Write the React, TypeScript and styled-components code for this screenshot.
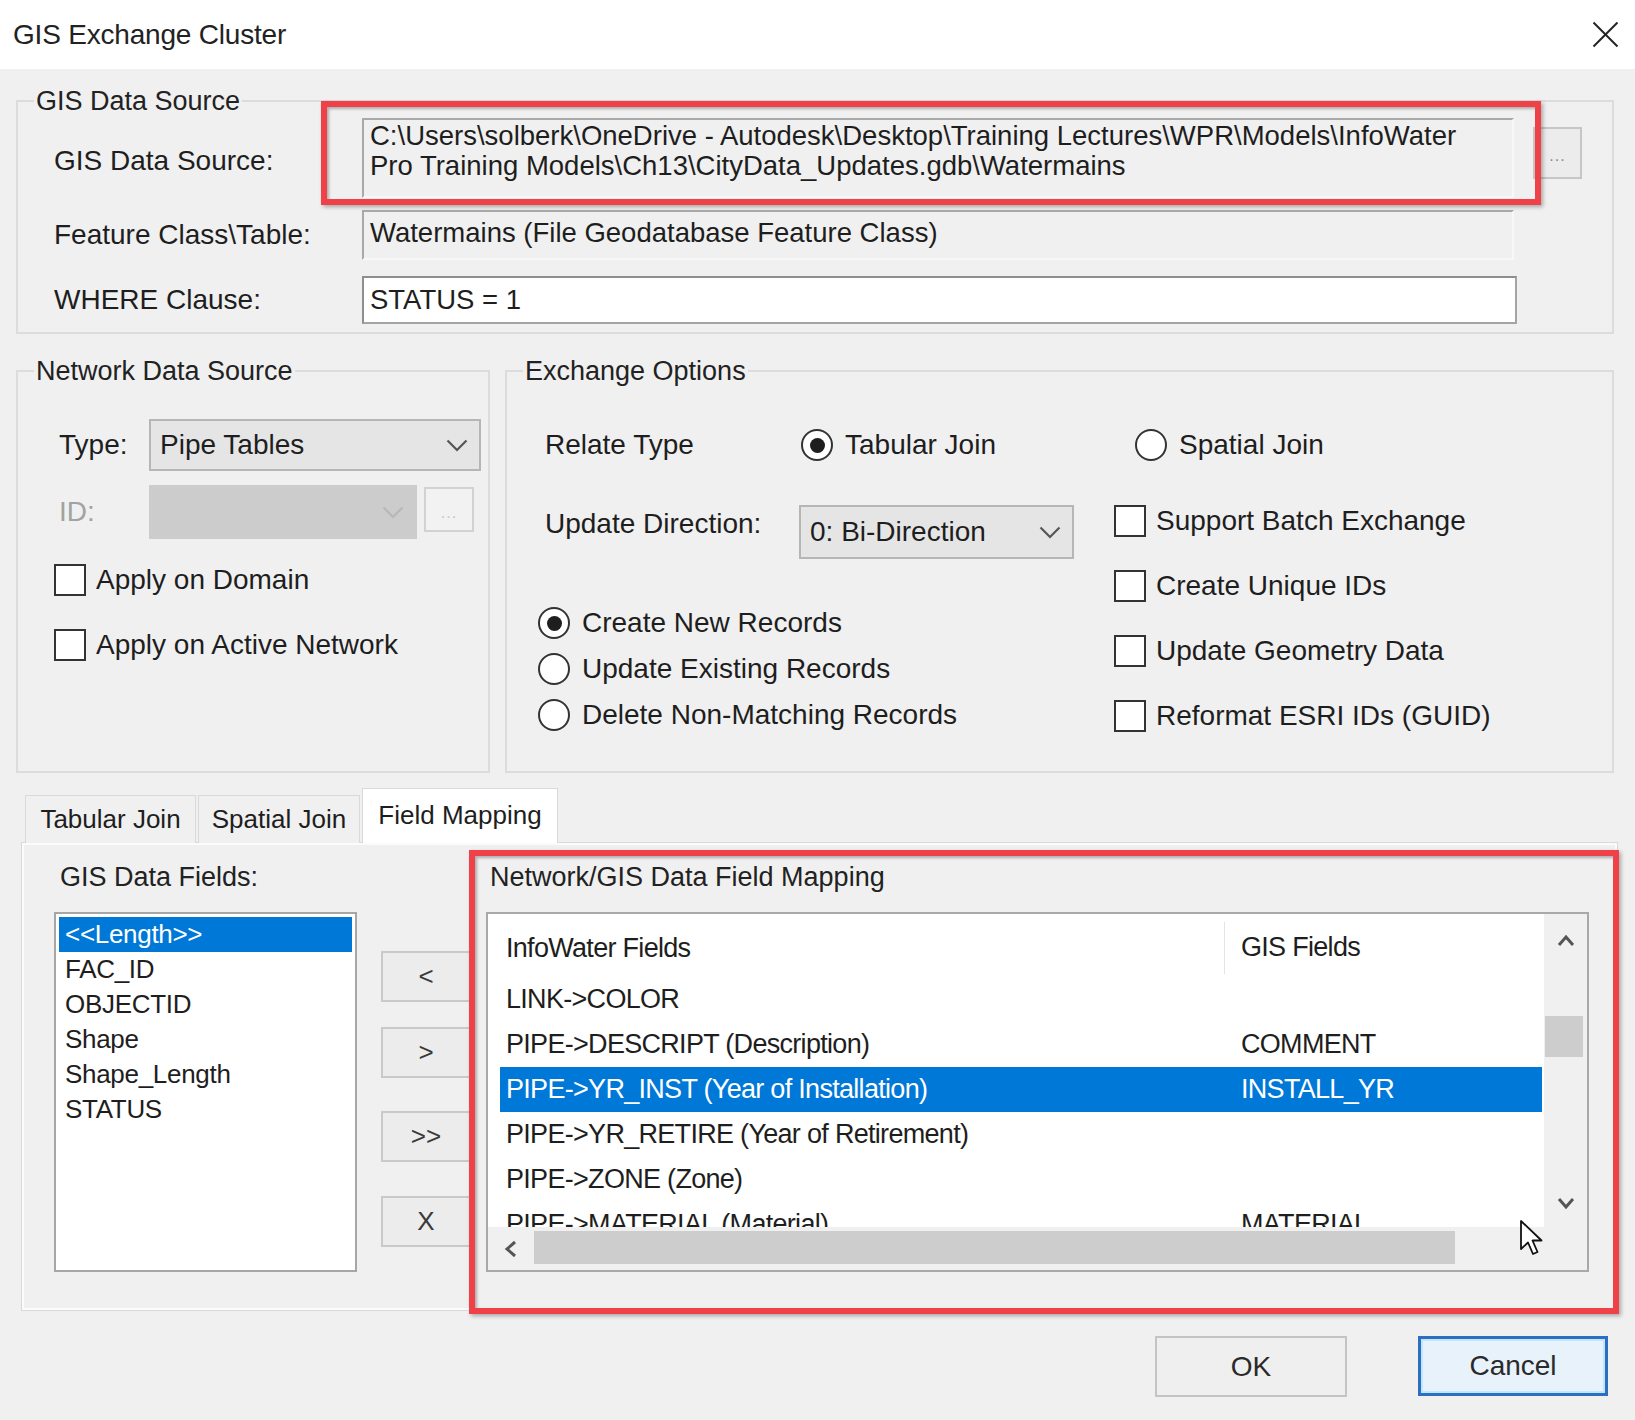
import React from "react";
import styled, { createGlobalStyle } from "styled-components";

const GlobalStyle = createGlobalStyle`
  html, body { margin: 0; padding: 0; background: #f0f0f0; }
  body { font-family: "Liberation Sans", Arial, sans-serif; color: #1e1e1e; }
  * { box-sizing: border-box; }
`;

const Window = styled.div`
  position: relative;
  width: 1635px;
  height: 1420px;
  background: #f0f0f0;
  display: flex;
  flex-direction: column;
  overflow: hidden;
`;

const TitleBar = styled.div`
  flex: none;
  height: 69px;
  background: #ffffff;
  display: flex;
  align-items: center;
  justify-content: space-between;
  padding: 0 16px 0 13px;
`;

const Title = styled.div`
  font-size: 28px;
  color: #222;
  letter-spacing: -0.2px;
  margin-top: 1px;
`;

const CloseIcon = styled.svg`
  width: 27px;
  height: 27px;
`;

const Body = styled.div`
  flex: 1;
  display: flex;
  flex-direction: column;
  padding: 17px 21px 0 16px;
`;

const GroupBox = styled.fieldset<{ $w: number; $h: number }>`
  margin: 0;
  padding: 0 0 0 16px;
  min-width: 0;
  width: ${(p) => p.$w}px;
  height: ${(p) => p.$h}px;
  border: 2px solid #dcdcdc;
  flex: none;
`;

const Legend = styled.legend`
  padding: 0 2px;
  font-size: 27px;
  line-height: 30px;
  color: #222;
`;

const Label = styled.span<{ $disabled?: boolean; $w?: number; $mt?: number }>`
  font-size: 28px;
  line-height: 30px;
  white-space: nowrap;
  color: ${(p) => (p.$disabled ? "#a2a2a2" : "#1e1e1e")};
  ${(p) => (p.$w ? `width: ${p.$w}px; flex: none;` : "")}
  ${(p) => (p.$mt ? `margin-top: ${p.$mt}px;` : "")}
`;

/* ---------- GIS Data Source ---------- */

const GisBody = styled.div`
  padding: 2px 0 0 20px;
  display: flex;
  flex-direction: column;
`;

const FieldRow = styled.div<{ $h: number; $mt?: number }>`
  display: grid;
  grid-template-columns: 308px 1155px auto;
  align-items: center;
  height: ${(p) => p.$h}px;
  margin-top: ${(p) => p.$mt ?? 0}px;
`;

const ReadOnlyBox = styled.div<{ $pt: number }>`
  align-self: stretch;
  width: 1152px;
  background: #f0f0f0;
  border-style: solid;
  border-width: 2px;
  border-color: #a9a9a9 #f8f8f8 #f8f8f8 #a9a9a9;
  padding: ${(p) => p.$pt}px 6px 0 6px;
  font-size: 27.5px;
  line-height: 30px;
  white-space: nowrap;
  overflow: hidden;
  color: #1e1e1e;
`;

const TextInput = styled.div`
  align-self: stretch;
  background: #ffffff;
  border: 2px solid #a4a4a4;
  border-top-color: #8e8e8e;
  border-left-color: #8e8e8e;
  display: flex;
  align-items: center;
  padding: 0 6px;
  font-size: 27.5px;
  color: #1e1e1e;
`;

const BrowseButton = styled.div<{ $w: number; $h: number; $disabled?: boolean; $ml?: number; $mt?: number }>`
  align-self: start;
  width: ${(p) => p.$w}px;
  height: ${(p) => p.$h}px;
  margin-left: ${(p) => p.$ml ?? 0}px;
  margin-top: ${(p) => p.$mt ?? 0}px;
  border: 2px solid ${(p) => (p.$disabled ? "#d2d2d2" : "#c6c6c6")};
  background: ${(p) => (p.$disabled ? "#f2f2f2" : "#ececec")};
  display: flex;
  align-items: center;
  justify-content: center;
  font-size: 16px;
  letter-spacing: 1px;
  color: ${(p) => (p.$disabled ? "#c6c6c6" : "#8a8a8a")};
  padding-top: 6px;
`;

/* ---------- Network / Exchange ---------- */

const GroupsRow = styled.div`
  display: flex;
  gap: 15px;
  margin-top: 22px;
`;

const NetBody = styled.div`
  display: flex;
  flex-direction: column;
  padding: 33px 0 0 25px;
`;

const NetRow = styled.div<{ $h: number; $mt?: number }>`
  display: flex;
  align-items: center;
  height: ${(p) => p.$h}px;
  margin-top: ${(p) => p.$mt ?? 0}px;
`;

const Select = styled.div<{ $w: number; $h: number; $disabled?: boolean; $mt?: number }>`
  flex: none;
  width: ${(p) => p.$w}px;
  height: ${(p) => p.$h}px;
  margin-top: ${(p) => p.$mt ?? 0}px;
  display: flex;
  align-items: center;
  justify-content: space-between;
  padding: 0 11px 0 9px;
  background: ${(p) => (p.$disabled ? "#cccccc" : "#e5e5e5")};
  border: 2px solid ${(p) => (p.$disabled ? "#cccccc" : "#b6b6b6")};
  font-size: 28px;
  color: #1e1e1e;
`;

const Chevron = styled.svg`
  width: 22px;
  height: 13px;
  flex: none;
`;

const CheckItem = styled.div<{ $h: number; $mt?: number; $ml?: number }>`
  display: flex;
  align-items: center;
  gap: 10px;
  height: ${(p) => p.$h}px;
  margin-top: ${(p) => p.$mt ?? 0}px;
  margin-left: ${(p) => p.$ml ?? 0}px;
`;

const CheckBox = styled.span`
  flex: none;
  width: 32px;
  height: 32px;
  background: #ffffff;
  border: 2px solid #333333;
`;

const RadioItem = styled.div<{ $h?: number; $w?: number }>`
  display: flex;
  align-items: center;
  gap: 12px;
  ${(p) => (p.$h ? `height: ${p.$h}px;` : "")}
  ${(p) => (p.$w ? `width: ${p.$w}px; flex: none;` : "")}
`;

const RadioCircle = styled.span<{ $checked?: boolean }>`
  flex: none;
  width: 32px;
  height: 32px;
  border-radius: 50%;
  border: 2.5px solid #333333;
  background: #ffffff;
  display: flex;
  align-items: center;
  justify-content: center;
  &::after {
    content: "";
    width: 15px;
    height: 15px;
    border-radius: 50%;
    background: ${(p) => (p.$checked ? "#1e1e1e" : "transparent")};
  }
`;

const ExBody = styled.div`
  display: flex;
  flex-direction: column;
  padding-top: 34px;
`;

const RelateRow = styled.div`
  display: flex;
  align-items: center;
  height: 50px;
  padding-left: 22px;
`;

const ExColumns = styled.div`
  display: flex;
  margin-top: 18px;
`;

const ExLeft = styled.div`
  width: 591px;
  flex: none;
  display: flex;
  flex-direction: column;
`;

const UpdateRow = styled.div`
  display: flex;
  align-items: center;
  height: 72px;
  padding-left: 22px;
`;

const RadioList = styled.div`
  display: flex;
  flex-direction: column;
  margin-top: 40px;
  padding-left: 15px;
`;

const ExRight = styled.div`
  display: flex;
  flex-direction: column;
`;

/* ---------- Tabs ---------- */

const TabStrip = styled.div`
  display: flex;
  align-items: flex-end;
  gap: 2px;
  height: 54px;
  margin-top: 16px;
  margin-left: 9px;
  margin-bottom: -1px;
`;

const Tab = styled.div<{ $active?: boolean; $w: number }>`
  position: relative;
  z-index: ${(p) => (p.$active ? 2 : 0)};
  width: ${(p) => p.$w}px;
  height: ${(p) => (p.$active ? 55 : 48)}px;
  display: flex;
  align-items: center;
  justify-content: center;
  padding-bottom: ${(p) => (p.$active ? 2 : 0)}px;
  background: ${(p) => (p.$active ? "#ffffff" : "#f0f0f0")};
  border: 1px solid #d9d9d9;
  border-bottom: none;
  font-size: 26px;
  color: #1e1e1e;
`;

const TabPanel = styled.div`
  width: 1597px;
  height: 469px;
  margin-left: 5px;
  border: 1px solid #d9d9d9;
  box-shadow: inset 0 0 0 2px #fbfbfb;
  background: #f0f0f0;
  display: flex;
  padding: 12px 0 0 32px;
`;

const FieldsCol = styled.div`
  width: 303px;
  flex: none;
  display: flex;
  flex-direction: column;
  padding-top: 7px;
`;

const PlainLabel = styled.span<{ $ml?: number }>`
  font-size: 27px;
  line-height: 30px;
  color: #222;
  white-space: nowrap;
  margin-left: ${(p) => p.$ml ?? 0}px;
`;

const ListBox = styled.div`
  margin-top: 20px;
  height: 360px;
  background: #ffffff;
  border: 2px solid #a6a6a6;
  padding: 3px;
  display: flex;
  flex-direction: column;
`;

const ListItem = styled.div<{ $selected?: boolean }>`
  height: 35px;
  line-height: 35px;
  padding-left: 6px;
  font-size: 26px;
  letter-spacing: -0.3px;
  background: ${(p) => (p.$selected ? "#0078d7" : "transparent")};
  color: ${(p) => (p.$selected ? "#ffffff" : "#1e1e1e")};
`;

const MoveCol = styled.div`
  width: 94px;
  flex: none;
  margin-left: 24px;
  display: flex;
  flex-direction: column;
`;

const MoveButton = styled.div<{ $mt: number }>`
  height: 51px;
  margin-top: ${(p) => p.$mt}px;
  border: 2px solid #c9c9c9;
  background: #ececec;
  display: flex;
  align-items: center;
  justify-content: center;
  padding-right: 4px;
  font-size: 26px;
  color: #3a3a3a;
`;

const MappingArea = styled.div`
  width: 1138px;
  height: 452px;
  flex: none;
  display: flex;
  flex-direction: column;
  padding: 7px 0 0 11px;
`;

const ListView = styled.div`
  margin-top: 20px;
  width: 1103px;
  height: 360px;
  border: 2px solid #a9a9a9;
  display: grid;
  grid-template-columns: 1fr 43px;
  grid-template-rows: 1fr 43px;
  background: #f0f0f0;
`;

const ListContent = styled.div`
  background: #ffffff;
  overflow: hidden;
  display: flex;
  flex-direction: column;
`;

const MapRow = styled.div<{ $selected?: boolean; $header?: boolean }>`
  flex: none;
  display: grid;
  grid-template-columns: 725px 1fr;
  align-items: center;
  margin: 0 2px 0 12px;
  height: ${(p) => (p.$header ? 63 : 45)}px;
  padding-top: ${(p) => (p.$header ? 3 : 0)}px;
  background: ${(p) => (p.$selected ? "#0078d7" : "transparent")};
  color: ${(p) => (p.$selected ? "#ffffff" : "#1e1e1e")};
  font-size: 27px;
  letter-spacing: -0.7px;
  white-space: nowrap;
`;

const MapCell = styled.div<{ $first?: boolean; $header?: boolean }>`
  padding-left: ${(p) => (p.$first ? 6 : 16)}px;
  ${(p) =>
    p.$header && p.$first
      ? `border-right: 1px solid #e4e4e4; height: 52px; display: flex; align-items: center; margin-top: 2px;`
      : ""}
`;

const VScroll = styled.div`
  display: flex;
  flex-direction: column;
  background: #f0f0f0;
`;

const HScroll = styled.div`
  display: flex;
  background: #f0f0f0;
`;

const ScrollArrow = styled.div<{ $w?: number; $h?: number }>`
  flex: none;
  ${(p) => (p.$w ? `width: ${p.$w}px;` : "")}
  ${(p) => (p.$h ? `height: ${p.$h}px;` : "")}
  display: flex;
  align-items: center;
  justify-content: center;
`;

const VThumb = styled.div`
  margin: 48px 4px 0 1px;
  height: 41px;
  background: #cdcdcd;
`;

const HThumb = styled.div`
  margin-top: 4px;
  width: 921px;
  height: 33px;
  background: #cdcdcd;
`;

const Spacer = styled.div`
  flex: 1;
`;

const Corner = styled.div`
  background: #f0f0f0;
`;

/* ---------- Footer ---------- */

const ButtonBar = styled.div`
  display: flex;
  justify-content: flex-end;
  align-items: flex-start;
  gap: 71px;
  margin-top: 25px;
  padding-right: 6px;
`;

const DialogButton = styled.div<{ $default?: boolean }>`
  width: ${(p) => (p.$default ? 190 : 192)}px;
  height: ${(p) => (p.$default ? 60 : 61)}px;
  display: flex;
  align-items: center;
  justify-content: center;
  font-size: 28px;
  color: #2a2a2a;
  background: ${(p) => (p.$default ? "#e8f2fb" : "#efefef")};
  border: ${(p) => (p.$default ? "3px solid #2a6fc0" : "2px solid #c4c4c4")};
  box-shadow: ${(p) => (p.$default ? "inset 0 0 0 2px #bfe6fb" : "none")};
`;

/* ---------- Overlays ---------- */

const Highlight = styled.div<{ $x: number; $y: number; $w: number; $h: number }>`
  position: absolute;
  left: ${(p) => p.$x}px;
  top: ${(p) => p.$y}px;
  width: ${(p) => p.$w}px;
  height: ${(p) => p.$h}px;
  border: 6px solid #ef4148;
  box-shadow: 2px 2px 4px rgba(0, 0, 0, 0.3), inset 2px 2px 3px rgba(0, 0, 0, 0.28);
  pointer-events: none;
  z-index: 5;
`;

const Cursor = styled.svg`
  position: absolute;
  left: 1519px;
  top: 1219px;
  width: 26px;
  height: 38px;
  z-index: 6;
`;

const DownChevron = ({ color = "#555" }: { color?: string }) => (
  <Chevron viewBox="0 0 22 13">
    <polyline points="1.5,1.5 11,11 20.5,1.5" fill="none" stroke={color} strokeWidth="2.2" />
  </Chevron>
);

const ScrollChevron = ({ dir }: { dir: "up" | "down" | "left" }) => {
  const pts =
    dir === "up" ? "3,12 10,4 17,12" : dir === "down" ? "3,4 10,12 17,4" : "12,3 4,10 12,17";
  const w = dir === "left" ? 16 : 20;
  const h = dir === "left" ? 20 : 16;
  return (
    <svg width={w} height={h} viewBox={`0 0 ${w} ${h}`}>
      <polyline points={pts} fill="none" stroke="#555" strokeWidth="3" strokeLinejoin="miter" />
    </svg>
  );
};

const gisFields = ["<<Length>>", "FAC_ID", "OBJECTID", "Shape", "Shape_Length", "STATUS"];

const mappings: { info: string; gis: string; selected?: boolean }[] = [
  { info: "LINK->COLOR", gis: "" },
  { info: "PIPE->DESCRIPT (Description)", gis: "COMMENT" },
  { info: "PIPE->YR_INST (Year of Installation)", gis: "INSTALL_YR", selected: true },
  { info: "PIPE->YR_RETIRE (Year of Retirement)", gis: "" },
  { info: "PIPE->ZONE (Zone)", gis: "" },
  { info: "PIPE->MATERIAL (Material)", gis: "MATERIAL" },
];

export default function App() {
  return (
    <>
      <GlobalStyle />
      <Window>
        <TitleBar>
          <Title>GIS Exchange Cluster</Title>
          <CloseIcon viewBox="0 0 27 27">
            <line x1="1.5" y1="1.5" x2="25.5" y2="25.5" stroke="#222" strokeWidth="2" />
            <line x1="25.5" y1="1.5" x2="1.5" y2="25.5" stroke="#222" strokeWidth="2" />
          </CloseIcon>
        </TitleBar>

        <Body>
          <GroupBox $w={1598} $h={248}>
            <Legend>GIS Data Source</Legend>
            <GisBody>
              <FieldRow $h={80}>
                <Label $mt={6}>GIS Data Source:</Label>
                <ReadOnlyBox $pt={1}>
                  C:\Users\solberk\OneDrive - Autodesk\Desktop\Training Lectures\WPR\Models\InfoWater
                  <br />
                  Pro Training Models\Ch13\CityData_Updates.gdb\Watermains
                </ReadOnlyBox>
                <BrowseButton $w={49} $h={52} $ml={16} $mt={9}>
                  ...
                </BrowseButton>
              </FieldRow>
              <FieldRow $h={50} $mt={12}>
                <Label>Feature Class\Table:</Label>
                <ReadOnlyBox $pt={6}>Watermains (File Geodatabase Feature Class)</ReadOnlyBox>
              </FieldRow>
              <FieldRow $h={48} $mt={16}>
                <Label>WHERE Clause:</Label>
                <TextInput>STATUS = 1</TextInput>
              </FieldRow>
            </GisBody>
          </GroupBox>

          <GroupsRow>
            <GroupBox $w={474} $h={417}>
              <Legend>Network Data Source</Legend>
              <NetBody>
                <NetRow $h={52}>
                  <Label $w={90}>Type:</Label>
                  <Select $w={332} $h={52}>
                    <span>Pipe Tables</span>
                    <DownChevron />
                  </Select>
                </NetRow>
                <NetRow $h={54} $mt={14}>
                  <Label $w={90} $disabled>
                    ID:
                  </Label>
                  <Select $w={268} $h={54} $disabled>
                    <span />
                    <DownChevron color="#b8b8b8" />
                  </Select>
                  <BrowseButton $w={50} $h={45} $ml={7} $mt={2} $disabled>
                    ...
                  </BrowseButton>
                </NetRow>
                <CheckItem $h={50} $mt={16} $ml={-5}>
                  <CheckBox />
                  <Label>Apply on Domain</Label>
                </CheckItem>
                <CheckItem $h={50} $mt={15} $ml={-5}>
                  <CheckBox />
                  <Label>Apply on Active Network</Label>
                </CheckItem>
              </NetBody>
            </GroupBox>

            <GroupBox $w={1109} $h={417}>
              <Legend>Exchange Options</Legend>
              <ExBody>
                <RelateRow>
                  <Label $w={256}>Relate Type</Label>
                  <RadioItem $w={334}>
                    <RadioCircle $checked />
                    <Label>Tabular Join</Label>
                  </RadioItem>
                  <RadioItem>
                    <RadioCircle />
                    <Label>Spatial Join</Label>
                  </RadioItem>
                </RelateRow>
                <ExColumns>
                  <ExLeft>
                    <UpdateRow>
                      <Label $w={254}>Update Direction:</Label>
                      <Select $w={275} $h={54} $mt={16}>
                        <span>0: Bi-Direction</span>
                        <DownChevron />
                      </Select>
                    </UpdateRow>
                    <RadioList>
                      <RadioItem $h={46}>
                        <RadioCircle $checked />
                        <Label>Create New Records</Label>
                      </RadioItem>
                      <RadioItem $h={46}>
                        <RadioCircle />
                        <Label>Update Existing Records</Label>
                      </RadioItem>
                      <RadioItem $h={46}>
                        <RadioCircle />
                        <Label>Delete Non-Matching Records</Label>
                      </RadioItem>
                    </RadioList>
                  </ExLeft>
                  <ExRight>
                    {["Support Batch Exchange", "Create Unique IDs", "Update Geometry Data", "Reformat ESRI IDs (GUID)"].map(
                      (t) => (
                        <CheckItem key={t} $h={65}>
                          <CheckBox />
                          <Label>{t}</Label>
                        </CheckItem>
                      )
                    )}
                  </ExRight>
                </ExColumns>
              </ExBody>
            </GroupBox>
          </GroupsRow>

          <TabStrip>
            <Tab $w={171}>Tabular Join</Tab>
            <Tab $w={162}>Spatial Join</Tab>
            <Tab $w={196} $active>
              Field Mapping
            </Tab>
          </TabStrip>

          <TabPanel>
            <FieldsCol>
              <PlainLabel $ml={6}>GIS Data Fields:</PlainLabel>
              <ListBox>
                {gisFields.map((f, i) => (
                  <ListItem key={f} $selected={i === 0}>
                    {f}
                  </ListItem>
                ))}
              </ListBox>
            </FieldsCol>

            <MoveCol>
              <MoveButton $mt={96}>&lt;</MoveButton>
              <MoveButton $mt={25}>&gt;</MoveButton>
              <MoveButton $mt={33}>&gt;&gt;</MoveButton>
              <MoveButton $mt={34}>X</MoveButton>
            </MoveCol>

            <MappingArea>
              <PlainLabel $ml={4}>Network/GIS Data Field Mapping</PlainLabel>
              <ListView>
                <ListContent>
                  <MapRow $header>
                    <MapCell $first $header>
                      InfoWater Fields
                    </MapCell>
                    <MapCell $header>GIS Fields</MapCell>
                  </MapRow>
                  {mappings.map((m) => (
                    <MapRow key={m.info} $selected={m.selected}>
                      <MapCell $first>{m.info}</MapCell>
                      <MapCell>{m.gis}</MapCell>
                    </MapRow>
                  ))}
                </ListContent>
                <VScroll>
                  <ScrollArrow $h={54}>
                    <ScrollChevron dir="up" />
                  </ScrollArrow>
                  <VThumb />
                  <Spacer />
                  <ScrollArrow $h={48}>
                    <ScrollChevron dir="down" />
                  </ScrollArrow>
                </VScroll>
                <HScroll>
                  <ScrollArrow $w={46}>
                    <ScrollChevron dir="left" />
                  </ScrollArrow>
                  <HThumb />
                  <Spacer />
                </HScroll>
                <Corner />
              </ListView>
            </MappingArea>
          </TabPanel>

          <ButtonBar>
            <DialogButton>OK</DialogButton>
            <DialogButton $default>Cancel</DialogButton>
          </ButtonBar>
        </Body>

        <Highlight $x={321} $y={101} $w={1220} $h={104} />
        <Highlight $x={469} $y={850} $w={1150} $h={464} />

        <Cursor viewBox="0 0 26 38">
          <path
            d="M2 2 L2 30 L9 23.5 L14 35 L18.5 33 L13.5 21.5 L22.5 21.5 Z"
            fill="#ffffff"
            stroke="#111"
            strokeWidth="1.8"
            strokeLinejoin="round"
          />
        </Cursor>
      </Window>
    </>
  );
}
